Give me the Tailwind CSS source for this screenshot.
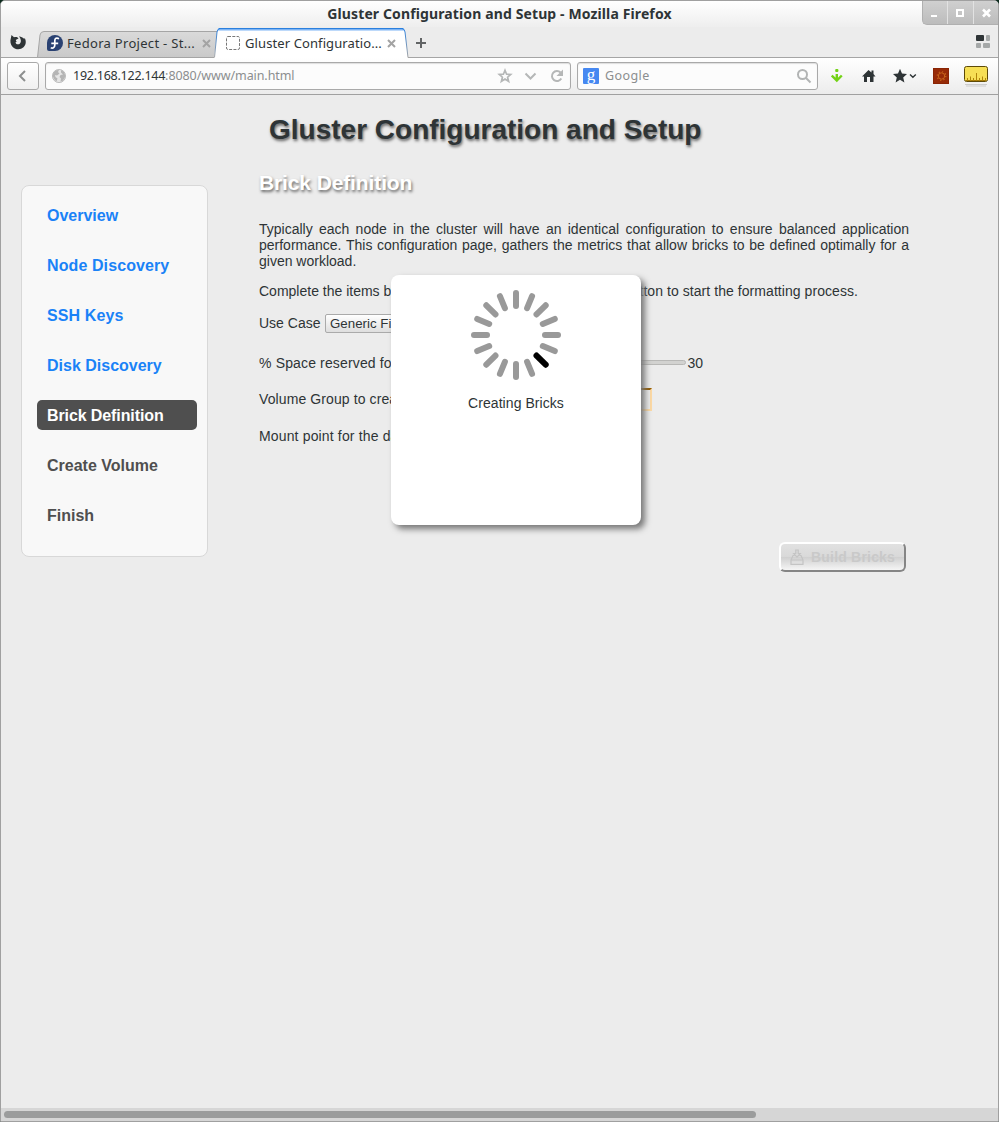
<!DOCTYPE html>
<html lang="en">
<head>
<meta charset="utf-8">
<title>Gluster Configuration and Setup</title>
<script src="https://cdn.jsdelivr.net/npm/@tailwindcss/browser@4"></script>
</head>
<body class="bg-[#0b2a1c]">
<div class="flex h-[1122px] w-[999px] flex-col overflow-hidden rounded-t-[5px] border border-[#a0a0a0] bg-[#ececec] font-['Noto_Sans',sans-serif] text-[#2e3436]">

  <!-- Window title bar -->
  <header class="relative flex h-[26px] shrink-0 justify-center bg-gradient-to-b from-white to-[#eeeeee]">
    <h1 class="mt-[3px] text-[14px] leading-5 font-bold tracking-[0.12px] whitespace-nowrap">Gluster Configuration and Setup - Mozilla Firefox</h1>
    <div class="absolute top-0 right-0 flex h-[24px] w-[76px] overflow-hidden rounded-bl-[5px] border-b border-l border-[#b0b0b0] bg-gradient-to-b from-[#d0d0d0] to-[#bcbcbc]">
      <svg class="h-6 w-[76px] shrink-0" viewBox="0 0 76 24" fill="none">
        <path d="M24.500 0V24M50.500 0V24" stroke="#e2e2e2"/>
        <path d="M8 15H14" stroke="#fff" stroke-width="2"/>
        <rect x="34" y="9" width="6" height="6" stroke="#fff" stroke-width="2"/>
        <path d="M60 8.500L67 15.500M67 8.500L60 15.500" stroke="#fff" stroke-width="2.600"/>
      </svg>
    </div>
  </header>

  <!-- Tab strip -->
  <nav class="relative flex h-[31px] shrink-0 border-b border-[#a5a5a5] text-[13px]">
    <svg class="mt-[7px] ml-2 size-[18px] shrink-0" viewBox="0 0 18 18">
      <path d="M2.500 1L5 3.300C7 2.500 9 3 9.500 4.500L7.500 5.500C6.500 6 6.800 7 7.800 7.200L6.500 8.500C7 10.500 9.500 11 11 9.500C12.600 7.800 12 5 10 2.300C13.500 3 15 4.500 15.200 5.200L15.700 3.800C17.500 7.500 17 11 14.500 13.300C11.500 16 6.500 15.800 3.700 12.900C1.300 10.500 1 7 1.800 4.500Z" fill="#2e3436"/>
    </svg>
    <div class="relative ml-[10px] flex h-[31px] w-[179px] shrink-0 items-center">
      <svg class="absolute inset-0 h-[31px] w-[184px]" viewBox="0 0 184 31" preserveAspectRatio="none">
        <defs><linearGradient id="t1" x2="0" y2="1"><stop stop-color="#dadada"/><stop offset="1" stop-color="#c9c9c9"/></linearGradient></defs>
        <path d="M.5 30.500L3 8Q3.500 4.500 7 4.500H182V30.500Z" fill="url(#t1)" stroke="#a5a5a5"/>
      </svg>
      <svg class="relative mt-px ml-[10px] size-4 shrink-0" viewBox="0 0 16 16">
        <path d="M0 8A8 8 0 1 1 8 16H2Q0 16 0 14Z" fill="#294172"/>
        <path d="M12 3.700C9.500 2.300 7.800 3.500 7.800 5.500V10C7.800 12.800 5.500 13.800 3.800 12.600M4.300 8.300H11.200" fill="none" stroke="#fff" stroke-width="1.700"/>
      </svg>
      <span class="relative ml-1 w-[130px] pt-[3px] tracking-[0.3px] whitespace-nowrap">Fedora Project - St...</span>
      <svg class="relative mt-px ml-[5px] size-[9px] shrink-0" viewBox="0 0 9 9"><path d="M1 1L8 8M8 1L1 8" stroke="#a3a3a3" stroke-width="2"/></svg>
    </div>
    <div class="relative z-10 -ml-[2px] flex h-[31px] w-[195px] shrink-0 items-center">
      <svg class="absolute inset-0 h-[31px] w-[195px]" viewBox="0 0 195 31" fill="none">
        <defs><linearGradient id="t2" x2="0" y2="1"><stop stop-color="#2a7fdd"/><stop offset="1" stop-color="#a5a5a5"/></linearGradient></defs>
        <path d="M0 31L3 5Q3.500 1.500 6 1.500H188Q190.500 1.500 191 5L194 31Z" fill="#fff"/>
        <path d="M4 2.500H190" stroke="#7db4f5" stroke-width="2"/>
        <path d="M.5 30.500L3 5Q3.500 1.500 6 1.500H188Q190.500 1.500 191 5L194 30.500" stroke="url(#t2)"/>
        <path d="M5 1.500H189" stroke="#2a7fdd"/>
      </svg>
      <svg class="relative mt-px ml-[11px] size-4 shrink-0" viewBox="0 0 16 16"><rect x="1.500" y="1.500" width="13" height="13" rx="1.500" fill="none" stroke="#777" stroke-dasharray="3 1.300"/></svg>
      <span class="relative ml-1 w-[138px] pt-[3px] tracking-[0.1px] whitespace-nowrap">Gluster Configuratio...</span>
      <svg class="relative mt-px ml-[4px] size-[9px] shrink-0" viewBox="0 0 9 9"><path d="M1 1L8 8M8 1L1 8" stroke="#a3a3a3" stroke-width="2"/></svg>
    </div>
    <svg class="mt-[10px] ml-[6px] size-[12px] shrink-0" viewBox="0 0 12 12"><path d="M1 6H11M6 1V11" stroke="#626465" stroke-width="2"/></svg>
    <svg class="mt-2 mr-2 ml-auto h-[14px] w-[14px] shrink-0" viewBox="0 0 14 14">
      <rect width="8" height="6" rx="1" fill="#2e3436"/><rect x="10" width="4" height="6" rx="1" fill="#a5a8a8"/>
      <rect y="8" width="5" height="5" rx="1" fill="#a5a8a8"/><rect x="7" y="8" width="7" height="5" rx="1" fill="#a5a8a8"/>
    </svg>
  </nav>

  <!-- Navigation toolbar -->
  <div class="flex h-[37px] shrink-0 items-start border-b border-[#a0a0a0] bg-gradient-to-b from-white to-[#ececec] pt-1 pl-[6px] text-[12.500px]">
    <div class="flex h-[28px] w-[32px] shrink-0 items-center justify-center rounded-[3px] border border-[#a9a9a9] bg-gradient-to-b from-white to-[#f0f0f0]">
      <svg class="size-[14px]" viewBox="0 0 14 14" fill="none"><path d="M9 2L4 7L9 12" stroke="#8d8f8f" stroke-width="2"/></svg>
    </div>
    <div class="ml-[6px] flex h-[28px] w-[526px] shrink-0 items-center rounded-[3px] border border-[#a9a9a9] bg-[#fcfcfc] pl-[6px] shadow-[inset_0_1px_1px_#ddd]">
      <svg class="size-[14px] shrink-0" viewBox="0 0 14 14">
        <circle cx="7" cy="7" r="6.600" fill="#e5e5e5" stroke="#aaa" stroke-width=".7"/>
        <path d="M1.500 3.500L4 1.200L7 1L6 3L7.500 4.500L5 6.500L3 6L3.500 8L5.500 9.500L4.500 12.500L2 10L.6 6.500ZM9 1L12 3L13.300 6.500L12.700 9L10.500 12L8.500 12.500L9 9.500L7.500 8L8.500 6L11 5.500L9 3.500Z" fill="#b5b5b5"/>
      </svg>
      <span class="ml-[7px] pt-px tracking-[-0.25px] whitespace-nowrap">192.168.122.144<span class="tracking-[-0.08px] text-[#8b8e8f]">:8080/www/main.html</span></span>
      <svg class="mr-[5px] ml-auto h-[16px] w-[68px] shrink-0" viewBox="0 0 68 16" fill="none" stroke="#b5b7b7" stroke-width="2">
        <path d="M8 2.300L9.600 6.200L13.700 6.500L10.600 9.200L11.600 13.300L8 11L4.400 13.300L5.400 9.200L2.300 6.500L6.400 6.200Z" stroke-width="1.700"/>
        <path d="M28.500 5.500L33.500 10.500L38.500 5.500"/>
        <path d="M63.500 4.500A5 5 0 1 0 64.300 10.500"/>
        <path d="M66 1.500V8H59.500Z" fill="#b5b7b7" stroke="none"/>
      </svg>
    </div>
    <div class="ml-[6px] flex h-[28px] w-[241px] shrink-0 items-center rounded-[3px] border border-[#a9a9a9] bg-[#fcfcfc] pl-[5px] shadow-[inset_0_1px_1px_#ddd]">
      <span class="flex size-4 items-center justify-center rounded-[1px] bg-[#4688f1] pb-[4px] font-['Liberation_Serif',serif] text-[17px] leading-none text-white">g</span>
      <span class="ml-[6px] pt-px tracking-[0.4px] text-[#8b8e8f]">Google</span>
      <svg class="mr-[5px] ml-auto size-4" viewBox="0 0 16 16" fill="none" stroke="#b2b4b4" stroke-width="2"><circle cx="6.500" cy="6.500" r="4.500"/><path d="M10 10L14.500 14.500"/></svg>
    </div>
    <svg class="ml-[13px] h-[28px] w-[160px] shrink-0" viewBox="0 0 160 28" fill="none">
      <path d="M.8 13.500L5.800 18.500L10.800 13.500M5.800 12V18" stroke="#73d216" stroke-width="2.400"/>
      <rect x="4.200" y="7" width="3.200" height="3" rx="1" fill="#73d216"/>
      <path d="M37.500 8L31 14.500H33V20H36V15H39V20H42.500V14.500H44.500L42.500 12V8.500H40.500V10.500Z" fill="#2e3436"/>
      <path d="M69 6.800L71 11.600L76 12L72.200 15.400L73.400 20.400L69 17.700L64.600 20.400L65.800 15.400L62 12L67 11.600Z" fill="#2e3436"/>
      <path d="M79 12.500L81.900 15.300L84.800 12.500" stroke="#2e3436" stroke-width="1.400"/>
      <rect x="102.500" y="6.500" width="15" height="15" fill="#972b08" stroke="#8a2505"/>
      <circle cx="110.500" cy="14" r="3.200" stroke="#c9661c" stroke-width="1"/><circle cx="110.500" cy="14" r="4.300" stroke="#c9661c" stroke-width="1.200" stroke-dasharray="1.200 2.180"/>
    </svg>
    <svg class="-ml-[27px] h-[28px] w-[26px] shrink-0" viewBox="0 0 26 28" fill="none">
      <rect x=".5" y="4.500" width="23" height="15" rx="2" fill="#f6df55" stroke="#5d4a08"/>
      <path d="M2 18.500H22" stroke="#a77c08"/>
      <path d="M3.500 19V16M6.500 19V14.500M9.500 19V16M12.500 19V11M15.500 19V16M18.500 19V14.500M21.500 19V16" stroke="#b08509"/>
      <path d="M1 22.500H23M2 24H22" stroke="#ccc"/>
    </svg>
  </div>

  <!-- Page -->
  <main class="relative min-h-0 flex-1 font-['Liberation_Sans',sans-serif] text-[14px] leading-4">
    <h2 class="pt-[19px] pl-[268px] text-[28px] leading-[32px] font-bold whitespace-nowrap [text-shadow:1px_2px_3px_#666]">Gluster Configuration and Setup</h2>
    <div class="flex items-start pl-5">
      <aside class="mt-[39px] h-[372px] w-[187px] shrink-0 rounded-[8px] border border-[#d8d8d8] bg-[#f8f8f8] pt-[14px] pl-[15px]">
        <ul class="flex w-[160px] flex-col gap-5 text-[16px] leading-[30px] font-bold text-[#1a82f7]">
          <li class="h-[30px] pt-px pl-[10px]">Overview</li>
          <li class="h-[30px] pt-px pl-[10px] tracking-[0.1px]">Node Discovery</li>
          <li class="h-[30px] pt-px pl-[10px] tracking-[0.1px]">SSH Keys</li>
          <li class="h-[30px] pt-px pl-[10px]">Disk Discovery</li>
          <li class="h-[30px] rounded-[5px] bg-[#4f4f4f] pt-px pl-[10px] tracking-[-0.1px] text-white">Brick Definition</li>
          <li class="h-[30px] pt-px pl-[10px] text-[#4f4f4f]">Create Volume</li>
          <li class="h-[30px] pt-px pl-[10px] text-[#4f4f4f]">Finish</li>
        </ul>
      </aside>
      <section class="ml-[51px] w-[650px]">
        <h3 class="mt-[25px] text-[21px] leading-6 font-bold tracking-[-0.12px] text-white [text-shadow:1px_2px_3px_#666]">Brick Definition</h3>
        <p class="mt-[26px] text-justify">Typically each node in the cluster will have an identical configuration to ensure balanced application performance. This configuration page, gathers the metrics that allow bricks to be defined optimally for a given workload.</p>
        <p class="mt-[14px] flex w-[599px] justify-between whitespace-nowrap"><span>Complete the items below, and click the Build Bricks</span><span class="tracking-[0.06px]">button to start the formatting process.</span></p>
        <div class="mt-[14px] flex h-5 items-center whitespace-nowrap"><span class="w-[66px]">Use Case</span>
          <span class="h-[19px] w-[150px] rounded-[2px] border border-[#aaa] bg-gradient-to-b from-white to-[#dedede] pl-1 text-[13.300px] leading-[17px]">Generic File Store</span></div>
        <div class="mt-[20px] flex h-5 items-center justify-between pr-[206px] whitespace-nowrap"><span class="tracking-[0.15px]">% Space reserved for snapshots</span>
          <span class="flex items-center"><span class="mr-px h-[5px] w-[129px] -translate-y-px rounded-[3px] border border-[#b8b8b6] bg-[#d2d2d0]"></span><span>30</span></span></div>
        <div class="mt-[14px] flex h-6 items-center justify-between pr-[257px] whitespace-nowrap"><span class="tracking-[0.1px]">Volume Group to create</span><span class="h-[23px] w-[150px] border-2 border-[#fcd9a4] border-t-[#8f5902]"></span></div>
        <div class="mt-[13px] flex h-6 items-center tracking-[0.15px] whitespace-nowrap">Mount point for the data</div>
        <div class="mt-[94px] flex justify-end pr-[3px]">
          <button class="flex h-[30px] w-[127px] items-center rounded-[6px] border-2 border-t-white border-r-[#858585] border-b-[#858585] border-l-white bg-[linear-gradient(#e1e1e1,#d9d9d9_48%,#cfcfcf_50%,#f5f5f5)] pl-[9px] font-bold text-[#c9c9c9]">
            <svg class="mr-[7px] h-4 w-[14px]" viewBox="0 0 14 16" fill="none" stroke="#c4c4c4" stroke-width="1.200"><path d="M1 11H13V15.300H1ZM1 11L3 6.500H4.500M13 11L11 6.500H9.500M5.800 1H8.200V4.500H10.300L7 8.200L3.700 4.500H5.800Z"/></svg>
            <span class="tracking-[0.2px] whitespace-nowrap">Build Bricks</span>
          </button>
        </div>
      </section>
    </div>

    <!-- Progress dialog -->
    <div class="absolute top-[180px] left-[390px] flex h-[250px] w-[250px] flex-col items-center rounded-[8px] bg-white pt-[15px] shadow-[4px_4px_6px_#777]">
      <svg class="size-[90px]" viewBox="-45 -45 90 90" stroke="#999" stroke-width="6" stroke-linecap="round">
        <path d="M0-42V-29"/>
        <path d="M0-42V-29" transform="rotate(22.500)"/><path d="M0-42V-29" transform="rotate(45)"/><path d="M0-42V-29" transform="rotate(67.500)"/>
        <path d="M0-42V-29" transform="rotate(90)"/><path d="M0-42V-29" transform="rotate(112.500)"/><path d="M0-42V-29" transform="rotate(135)" stroke="#000"/>
        <path d="M0-42V-29" transform="rotate(157.500)"/><path d="M0-42V-29" transform="rotate(180)"/><path d="M0-42V-29" transform="rotate(202.500)"/>
        <path d="M0-42V-29" transform="rotate(225)"/><path d="M0-42V-29" transform="rotate(247.500)"/><path d="M0-42V-29" transform="rotate(270)"/>
        <path d="M0-42V-29" transform="rotate(292.500)"/><path d="M0-42V-29" transform="rotate(315)"/><path d="M0-42V-29" transform="rotate(337.500)"/>
      </svg>
      <p class="mt-[15px] tracking-[0.06px]">Creating Bricks</p>
    </div>
  </main>

  <!-- Horizontal scrollbar -->
  <div class="flex h-[13px] shrink-0 items-center bg-[#d6d6d6] pl-[3px]"><div class="h-[7px] w-[752px] rounded-full bg-[#9b9c9c]"></div></div>
</div>
</body>
</html>
